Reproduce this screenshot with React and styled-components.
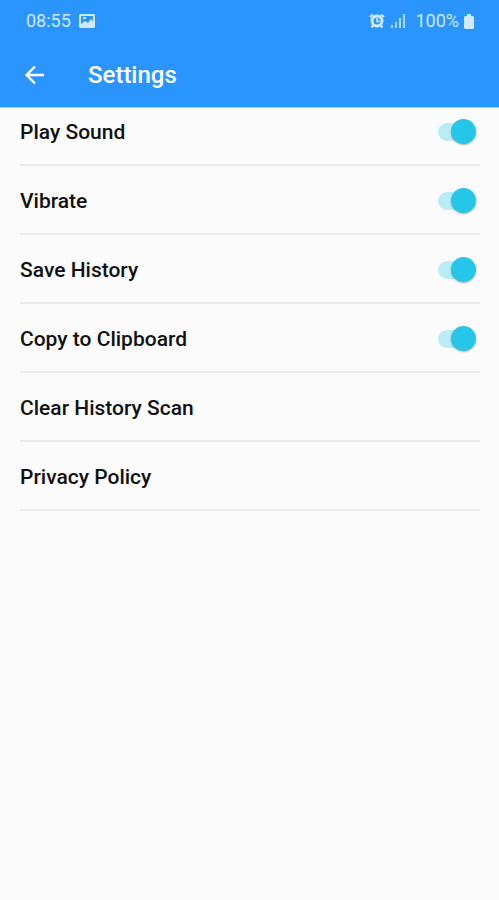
import React, { useState } from 'react';
import styled, { createGlobalStyle } from 'styled-components';

const toggles = ['Play Sound', 'Vibrate', 'Save History', 'Copy to Clipboard'];
const actions = ['Clear History Scan', 'Privacy Policy'];

function StatusIcons() {
	return (
		<StyledStatusGroup>
			<svg width="16" height="16" viewBox="0 0 16 16" fill="none" aria-hidden="true">
				<path
					d="M1 4 4 1.5M15 4 12 1.5M4 12.5 2.5 14.5M12 12.5 13.5 14.5"
					stroke="currentColor"
					strokeWidth="2.2"
				/>
				<circle cx="8" cy="8" r="5" stroke="currentColor" strokeWidth="3" />
				<path d="M8 5v3.500h3" stroke="currentColor" strokeWidth="1.6" />
			</svg>
			<StyledSignal width="14" height="14" viewBox="0 0 14 14" fill="currentColor" aria-hidden="true">
				<path d="M0 11h2v3H0zM4 8h2v6H4zM8 4h2v10H8zM12 0h2v14h-2z" />
			</StyledSignal>
			<span>100%</span>
			<StyledBattery width="10" height="15" viewBox="0 0 10 15" fill="currentColor" aria-hidden="true">
				<path d="M3 0h4v2h2l1 1v11l-1 1H1l-1-1V3l1-1h2z" />
			</StyledBattery>
		</StyledStatusGroup>
	);
}

function ToggleRow({ label }) {
	const [on, setOn] = useState(true);

	return (
		<StyledRow>
			<StyledLabel>
				{label}
				<StyledSwitch
					type="checkbox"
					role="switch"
					checked={on}
					onChange={() => setOn(!on)}
				/>
			</StyledLabel>
		</StyledRow>
	);
}

function App() {
	return (
		<>
			<GlobalStyle />
			<StyledHeader>
				<StyledStatusBar>
					<StyledStatusGroup>
						<span>08:55</span>
						<StyledPicture width="16" height="14" viewBox="0 0 16 14" aria-hidden="true">
							<path
								fill="currentColor"
								fillRule="evenodd"
								d="M1 0h14l1 1v12l-1 1H1l-1-1V1zM2 2v8l4-3 3 2 3-4 2 2V2zM4 3h3v2H4z"
							/>
						</StyledPicture>
					</StyledStatusGroup>
					<StatusIcons />
				</StyledStatusBar>
				<StyledToolbar>
					<StyledBack type="button" aria-label="Back">
						<svg width="20" height="20" viewBox="0 0 20 20" fill="none" aria-hidden="true">
							<path d="M19 10H2M10 1.5 1.5 10l8.5 8.5" stroke="currentColor" strokeWidth="2.4" />
						</svg>
					</StyledBack>
					<StyledTitle>Settings</StyledTitle>
				</StyledToolbar>
			</StyledHeader>
			<StyledList>
				{toggles.map((label) => (
					<ToggleRow key={label} label={label} />
				))}
				{actions.map((label) => (
					<StyledRow key={label}>
						<StyledAction type="button">{label}</StyledAction>
					</StyledRow>
				))}
			</StyledList>
		</>
	);
}

const GlobalStyle = createGlobalStyle`
	* {
		box-sizing: border-box;
	}

	body {
		margin: 0;
		background: #fbfbfb;
		color: #111111;
		font-family: Roboto, 'Liberation Sans', sans-serif;
	}
`;

const StyledHeader = styled.header`
	position: sticky;
	top: 0;
	z-index: 1;
	padding-bottom: 7px;
	background: #2b95ff;
	color: #ffffff;
	box-shadow: 0 1px 1px #a5d8fb;
`;

const StyledStatusBar = styled.div`
	display: flex;
	align-items: center;
	justify-content: space-between;
	height: 42px;
	padding: 0 25px 0 26px;
	color: #cfe9ff;
	font-size: 18px;
	line-height: 20px;
`;

const StyledStatusGroup = styled.div`
	display: flex;
	align-items: center;
`;

const StyledPicture = styled.svg`
	margin-left: 8px;
`;

const StyledSignal = styled.svg`
	margin: 0 10px 0 6px;
	opacity: 0.8;
`;

const StyledBattery = styled.svg`
	margin-left: 5px;
`;

const StyledToolbar = styled.div`
	display: flex;
	align-items: center;
	height: 58px;
	padding: 8px 16px 0;
`;

const StyledBack = styled.button`
	display: flex;
	align-items: center;
	justify-content: center;
	width: 38px;
	height: 36px;
	margin-right: 34px;
	padding: 0;
	border: 0;
	background: none;
	color: inherit;
	cursor: pointer;
`;

const StyledTitle = styled.h1`
	margin: 0;
	font-size: 24px;
	font-weight: 500;
	line-height: 28px;
`;

/* first row sits partly under the header */
const StyledList = styled.ul`
	margin: -10px 0 0;
	padding: 0 19px 0 20px;
	list-style: none;
`;

const StyledRow = styled.li`
	display: flex;
	height: 69px;
	padding-top: 2px;
	border-bottom: 2px solid #ebebeb;
	font-size: 21px;
	font-weight: 500;
	line-height: 24px;
`;

const StyledLabel = styled.label`
	display: flex;
	flex: 1;
	align-items: center;
	justify-content: space-between;
	padding-right: 4px;
	cursor: pointer;
`;

const StyledSwitch = styled.input`
	display: flex;
	align-items: center;
	justify-content: flex-end;
	appearance: none;
	width: 38px;
	height: 25px;
	margin: 0;
	border-radius: 13px;
	cursor: pointer;

	/* track, tucked under the thumb */
	&::before {
		content: '';
		flex: none;
		width: 34px;
		height: 18px;
		margin-right: ${({ checked }) => (checked ? '-21px' : '-34px')};
		border-radius: 9px;
		background: ${({ checked }) => (checked ? '#b9edf5' : '#c8c8c8')};
	}

	&::after {
		content: '';
		z-index: 1;
		flex: none;
		width: 25px;
		height: 25px;
		margin-right: ${({ checked }) => (checked ? '0' : '13px')};
		border-radius: 50%;
		background: ${({ checked }) => (checked ? '#26c6e8' : '#f1f1f1')};
		box-shadow: 0 1px 2px rgba(0, 0, 0, 0.3);
	}
`;

const StyledAction = styled.button`
	flex: 1;
	padding: 0;
	border: 0;
	background: none;
	color: inherit;
	font: inherit;
	text-align: left;
	cursor: pointer;
`;

export default App;
